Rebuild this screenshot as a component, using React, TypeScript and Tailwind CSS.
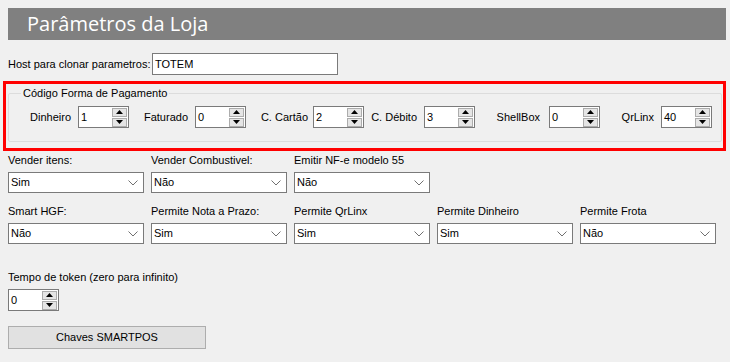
const pagamentos = [
    { label: "Dinheiro", value: "1", lw: "w-[69px]", pr: "pr-[7px]" },
    { label: "Faturado", value: "0", lw: "w-[66px]", pr: "pr-[7px]" },
    { label: "C. Cartão", value: "2", lw: "w-[67px]", pr: "pr-[5px]" },
    { label: "C. Débito", value: "3", lw: "w-[60px]", pr: "pr-[7px]" },
    { label: "ShellBox", value: "0", lw: "w-[74px]", pr: "pr-[9px]" },
    { label: "QrLinx", value: "40", lw: "w-[61px]", pr: "pr-[7px]" },
];

const linha1 = [
    { label: "Vender itens:", value: "Sim" },
    { label: "Vender Combustivel:", value: "Não" },
    { label: "Emitir NF-e modelo 55", value: "Não" },
];

const linha2 = [
    { label: "Smart HGF:", value: "Não" },
    { label: "Permite Nota a Prazo:", value: "Sim" },
    { label: "Permite QrLinx", value: "Sim" },
    { label: "Permite Dinheiro", value: "Sim" },
    { label: "Permite Frota", value: "Não" },
];

function Spinner({ value }: { value: string }) {
    return (
        <div className="w-[51px] h-[22px] bg-white border border-[#7a7a7a] flex items-center justify-between pl-[2px] pr-[1px]">
            <span className="leading-none">{value}</span>
            <div className="flex flex-col gap-[1px]">
                <div className="w-[15px] h-[9px] bg-[#e5e5e5] border border-[#acacac] flex items-center justify-center">
                    <svg width="7" height="4" viewBox="0 0 7 4">
                        <path d="M3.5 0 L7 4 L0 4 Z" fill="#000" />
                    </svg>
                </div>
                <div className="w-[15px] h-[9px] bg-[#e5e5e5] border border-[#acacac] flex items-center justify-center">
                    <svg width="7" height="4" viewBox="0 0 7 4">
                        <path d="M0 0 L7 0 L3.5 4 Z" fill="#000" />
                    </svg>
                </div>
            </div>
        </div>
    );
}

function Combo({ label, value }: { label: string; value: string }) {
    return (
        <div className="w-[136px] flex flex-col">
            <div className="h-[14px] leading-[14px] whitespace-nowrap">{label}</div>
            <div className="mt-[5px] h-[21px] bg-white border border-[#7a7a7a] flex items-center justify-between pl-[2px] pr-[5px]">
                <span>{value}</span>
                <svg width="10" height="6" viewBox="0 0 10 6">
                    <path d="M0.5 0.5 L5 5 L9.5 0.5" fill="none" stroke="#707070" strokeWidth="1" />
                </svg>
            </div>
        </div>
    );
}

export default function App() {
    return (
        <div className="w-[730px] h-[362px] bg-[#f0f0f0] pt-2 text-[11px] text-black font-['Liberation_Sans',sans-serif]">
            {/* Cabeçalho */}
            <div className="ml-2 w-[718px] h-[32px] bg-[#808080] pl-[19px] flex items-center">
                <h1 className="text-white text-[20px] font-['Open_Sans',sans-serif] leading-none">
                    Parâmetros da Loja
                </h1>
            </div>

            <div className="mt-[13px] ml-2 flex items-center">
                <span className="w-[144px]">Host para clonar parametros:</span>
                <div className="w-[186px] h-[22px] bg-white border border-[#7a7a7a] pl-[2px] flex items-center">
                    TOTEM
                </div>
            </div>

            {/* Forma de pagamento */}
            <div className="mt-[6px] ml-[3px] w-[723px] h-[70px] border-[3px] border-[#ff0000]">
                <fieldset className="mt-[2px] mx-[2px] w-[714px] h-[56px] border border-[#dcdcdc] rounded-[2px] px-0">
                    <legend className="ml-[12px] px-[2px] leading-[14px]">Código Forma de Pagamento</legend>
                    <div className="flex items-center mt-[6px]">
                        {pagamentos.map((p) => (
                            <div key={p.label} className="flex items-center">
                                <span className={`${p.lw} ${p.pr} text-right`}>{p.label}</span>
                                <Spinner value={p.value} />
                            </div>
                        ))}
                    </div>
                </fieldset>
            </div>

            <div className="mt-[2px] ml-2 flex gap-[7px]">
                {linha1.map((c) => (
                    <Combo key={c.label} {...c} />
                ))}
            </div>

            <div className="mt-[11px] ml-2 flex gap-[7px]">
                {linha2.map((c) => (
                    <Combo key={c.label} {...c} />
                ))}
            </div>

            <div className="mt-[26px] ml-2">
                <div className="h-[14px] leading-[14px]">Tempo de token (zero para infinito)</div>
                <div className="mt-[5px]">
                    <Spinner value="0" />
                </div>
            </div>

            <button className="mt-[15px] ml-2 w-[198px] h-[23px] bg-[#e1e1e1] border border-[#adadad] text-[11px]">
                Chaves SMARTPOS
            </button>
        </div>
    );
}
